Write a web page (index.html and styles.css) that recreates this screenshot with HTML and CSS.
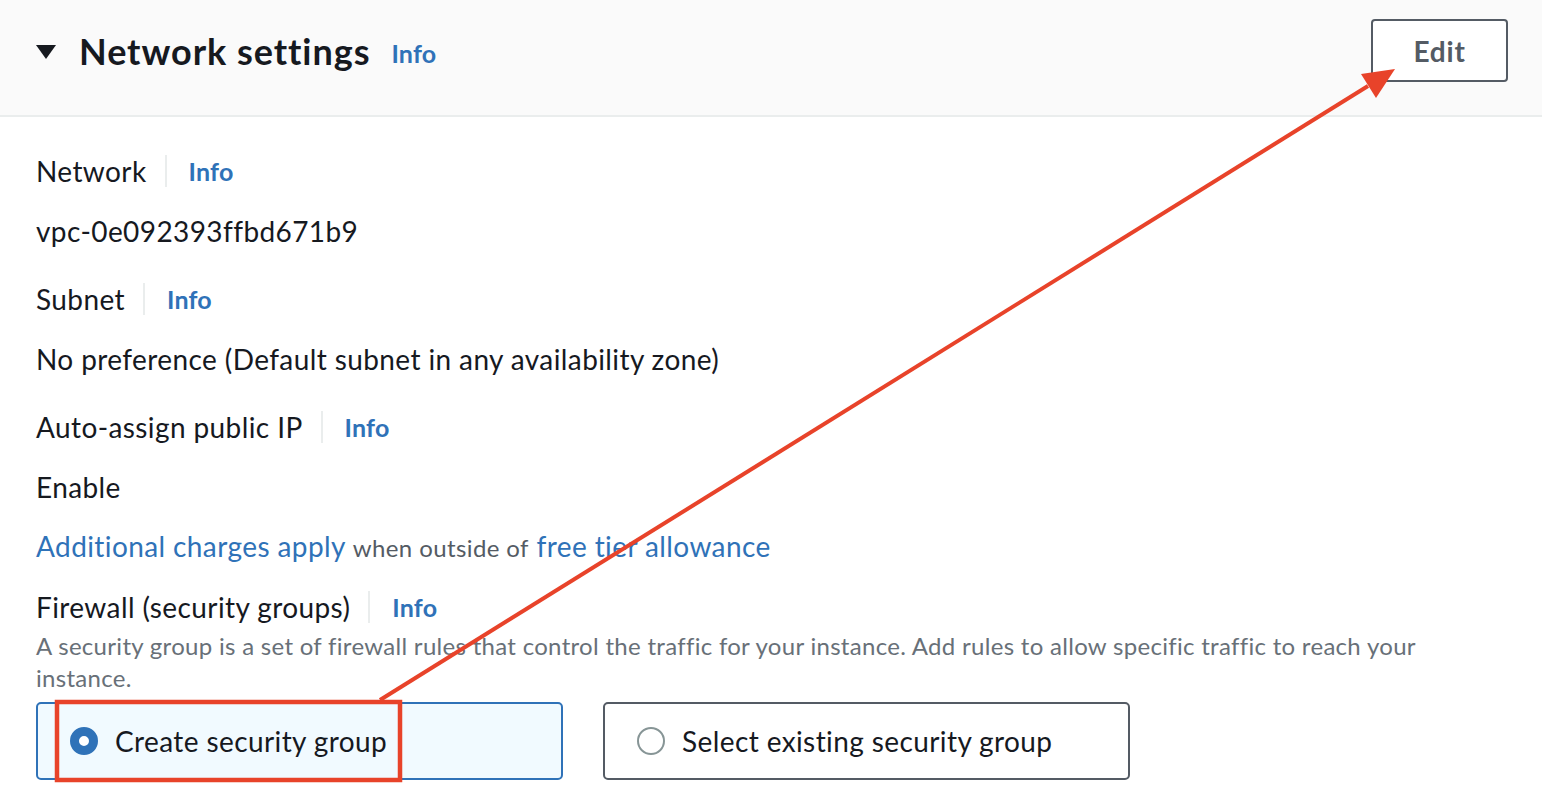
FILE: index.html
```html
<!DOCTYPE html>
<html>
<head>
<meta charset="utf-8">
<link rel="stylesheet" href="styles.css">
</head>
<body>
<div class="page">
  <header class="header">
    <div class="title-group">
      <svg class="caret" width="20" height="16" viewBox="0 0 20 16"><polygon points="0,1 20,1 10,15" fill="#16191f"/></svg>
      <h2 class="title">Network settings</h2>
      <a class="info info-head">Info</a>
    </div>
    <button class="edit-btn">Edit</button>
  </header>
  <main class="content">
    <div class="field">
      <div class="label"><span>Network</span><span class="divider"></span><a class="info">Info</a></div>
      <div class="value">vpc-0e092393ffbd671b9</div>
    </div>
    <div class="field">
      <div class="label"><span>Subnet</span><span class="divider"></span><a class="info">Info</a></div>
      <div class="value">No preference (Default subnet in any availability zone)</div>
    </div>
    <div class="field">
      <div class="label"><span>Auto-assign public IP</span><span class="divider"></span><a class="info">Info</a></div>
      <div class="value">Enable</div>
      <div class="value note"><a class="link">Additional charges apply</a> <span class="small">when outside of</span> <a class="link">free tier allowance</a></div>
    </div>
    <div class="field field-tight">
      <div class="label"><span>Firewall (security groups)</span><span class="divider"></span><a class="info">Info</a></div>
      <div class="desc">A security group is a set of firewall rules that control the traffic for your instance. Add rules to allow specific traffic to reach your instance.</div>
      <div class="tiles">
        <div class="tile selected"><span class="radio on"></span><span>Create security group</span></div>
        <div class="tile"><span class="radio"></span><span>Select existing security group</span></div>
      </div>
    </div>
  </main>
  <svg class="annot" width="1542" height="808" viewBox="0 0 1542 808">
    <rect x="57" y="702" width="343" height="78" fill="none" stroke="#e8432a" stroke-width="4.5"/>
    <line x1="380" y1="700" x2="1368" y2="86" stroke="#e8432a" stroke-width="4"/>
    <polygon points="1395,69 1376,98 1361,74" fill="#e8432a"/>
  </svg>
</div>
</body>
</html>
```
FILE: styles.css
```css
html, body {
  margin: 0;
  padding: 0;
  background: #ffffff;
}
body {
  font-family: "Lato", "Liberation Sans", sans-serif;
  color: #16191f;
  width: 1542px;
  height: 808px;
  overflow: hidden;
  letter-spacing: 0.4px;
}
.page {
  position: relative;
  width: 1542px;
  height: 808px;
}
.header {
  box-sizing: border-box;
  height: 117px;
  background: #fafafa;
  border-bottom: 2px solid #eaeded;
  display: flex;
  justify-content: space-between;
  align-items: flex-start;
  padding: 19px 34px 0 36px;
}
.title-group {
  display: flex;
  align-items: center;
  height: 63px;
}
.caret {
  margin-right: 23px;
  margin-top: 2px;
}
.title {
  margin: 0;
  font-size: 36px;
  font-weight: 700;
  line-height: 40px;
  color: #16191f;
  letter-spacing: 0.95px;
}
.info {
  color: #2f72b8;
  font-weight: 700;
  font-size: 25px;
  line-height: 40px;
  text-decoration: none;
  letter-spacing: 0.2px;
}
.info-head {
  margin-left: 21px;
  margin-top: 4px;
}
.edit-btn {
  box-sizing: border-box;
  width: 137px;
  height: 63px;
  border: 2px solid #545b64;
  border-radius: 4px;
  background: #ffffff;
  color: #545b64;
  font-family: inherit;
  font-size: 28px;
  font-weight: 700;
  letter-spacing: 0.8px;
  padding: 0;
}
.content {
  padding: 34px 36px 0 36px;
}
.field + .field {
  margin-top: 28px;
}
.field + .field-tight {
  margin-top: 19px;
}
.label {
  display: flex;
  align-items: center;
  font-size: 28px;
  line-height: 40px;
  height: 40px;
}
.divider {
  width: 2px;
  height: 32px;
  background: #eaeded;
  margin: 0 22px 0 18px;
}
.value {
  font-size: 28px;
  line-height: 40px;
  margin-top: 20px;
}
.value.note {
  margin-top: 19px;
}
.link {
  color: #2f72b8;
  text-decoration: none;
}
.small {
  font-size: 24px;
  color: #545b64;
}
.desc {
  margin-top: 3px;
  font-size: 24px;
  line-height: 32px;
  color: #687078;
  letter-spacing: 0.3px;
  padding-right: 40px;
}
.tiles {
  margin-top: 8px;
  display: flex;
  gap: 40px;
}
.tile {
  box-sizing: border-box;
  width: 527px;
  height: 78px;
  border: 2px solid #545b64;
  border-radius: 5px;
  display: flex;
  align-items: center;
  padding-left: 32px;
  font-size: 28px;
  gap: 17px;
}
.tile.selected {
  border-color: #2f72b8;
  background: #f1faff;
}
.radio {
  box-sizing: border-box;
  width: 28px;
  height: 28px;
  border-radius: 50%;
  border: 2px solid #879596;
  background: #ffffff;
  flex: none;
}
.radio.on {
  border: 9px solid #2f72b8;
}
.annot {
  position: absolute;
  left: 0;
  top: 0;
  pointer-events: none;
}
```
